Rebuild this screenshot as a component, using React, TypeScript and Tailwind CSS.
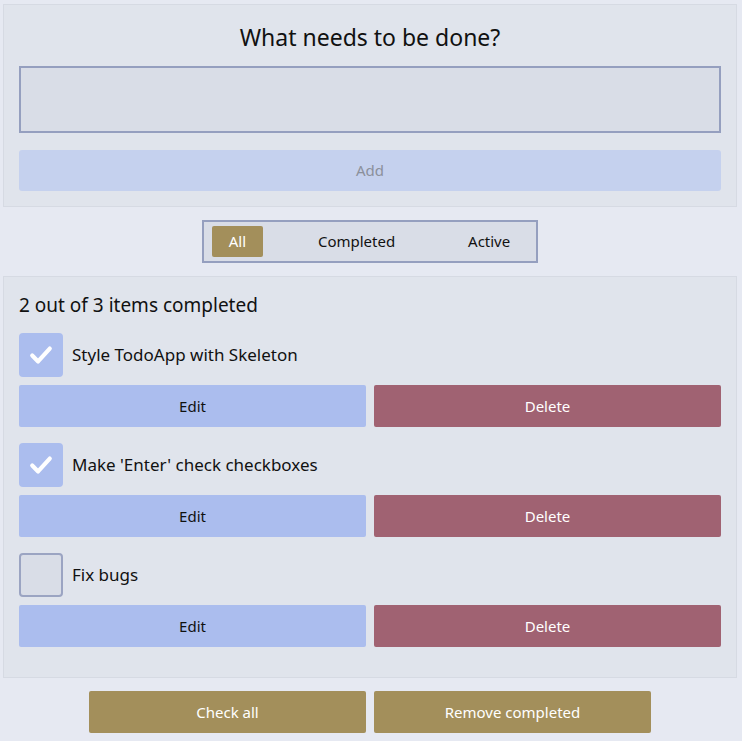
import { useState } from "react";

type Todo = {
    id: number;
    text: string;
    done: boolean;
};

const initialTodos: Todo[] = [
    { id: 1, text: "Style TodoApp with Skeleton", done: true },
    { id: 2, text: "Make 'Enter' check checkboxes", done: true },
    { id: 3, text: "Fix bugs", done: false },
];

const filters = [
    { name: "All", cls: "w-[51px]" },
    { name: "Completed", cls: "w-[188px]" },
    { name: "Active", cls: "w-[78px]" },
];

function CheckIcon() {
    return (
        <svg viewBox="0 0 24 24" className="h-[28px] w-[28px]" fill="none">
            <path
                d="M4.5 12.5l5 5L19.5 6.5"
                stroke="white"
                strokeWidth="3.6"
                strokeLinecap="round"
                strokeLinejoin="round"
            />
        </svg>
    );
}

export default function App() {
    const [todos, setTodos] = useState<Todo[]>(initialTodos);
    const [filter, setFilter] = useState("All");
    const [text, setText] = useState("");

    const doneCount = todos.filter((t) => t.done).length;

    const toggle = (id: number) =>
        setTodos((ts) => ts.map((t) => (t.id === id ? { ...t, done: !t.done } : t)));

    const visible = todos.filter((t) =>
        filter === "All" ? true : filter === "Completed" ? t.done : !t.done
    );

    return (
        <div
            className="min-h-screen bg-[#e6e9f2] pl-[3px] pr-[5px] pt-1 pb-2 text-[#111]"
            style={{ fontFamily: '"Segoe UI", "Noto Sans", sans-serif' }}
        >
            {/* new todo */}
            <div className="border border-[#d6dae3] bg-[#e0e4ec] px-[15px] pt-[16px] pb-[15px]">
                <h1 className="text-center text-[23px] leading-[32px]">What needs to be done?</h1>
                <input
                    value={text}
                    onChange={(e) => setText(e.target.value)}
                    className="mt-[13px] block h-[67px] w-full border-2 border-[#959fbf] bg-[#d9dde7] px-3 text-[17px] outline-none"
                />
                <button
                    disabled={!text}
                    className="mt-[17px] block h-[41px] w-full rounded-[3px] bg-[#c5d1ee] text-[15px] text-[#8b909b]"
                >
                    Add
                </button>
            </div>

            {/* filters */}
            <div className="flex justify-center py-[13px]">
                <div className="flex h-[43px] w-[336px] items-center border-2 border-[#959fbf] bg-[#d9dde7] px-[8px]">
                    {filters.map((f) => (
                        <button
                            key={f.name}
                            onClick={() => setFilter(f.name)}
                            className={`h-[31px] ${f.cls} rounded-[2px] text-[15px] ${filter === f.name ? "bg-[#a38f5b] text-white" : ""}`}
                        >
                            {f.name}
                        </button>
                    ))}
                </div>
            </div>

            {/* list */}
            <div className="border border-[#d6dae3] bg-[#e0e4ec] px-[15px] pt-[14px] pb-[30px]">
                <p className="text-[19px] leading-[28px]">
                    {doneCount} out of {todos.length} items completed
                </p>
                <div className="mt-[14px] flex flex-col gap-4">
                    {visible.map((t) => (
                        <div key={t.id}>
                            <label className="flex cursor-pointer items-center gap-[9px]">
                                <span
                                    onClick={() => toggle(t.id)}
                                    className={
                                        t.done
                                            ? "flex h-[44px] w-[44px] items-center justify-center rounded-[4px] bg-[#abbdee]"
                                            : "flex h-[44px] w-[44px] items-center justify-center rounded-[4px] border-2 border-[#9ba4c2] bg-[#d9dde7]"
                                    }
                                >
                                    {t.done && <CheckIcon />}
                                </span>
                                <span className="text-[17px]">{t.text}</span>
                            </label>
                            <div className="mt-2 grid grid-cols-2 gap-2">
                                <button className="h-[42px] rounded-[2px] bg-[#abbdee] text-[15px] text-[#111]">
                                    Edit
                                </button>
                                <button
                                    onClick={() => setTodos((ts) => ts.filter((x) => x.id !== t.id))}
                                    className="h-[42px] rounded-[2px] bg-[#a06272] text-[15px] text-white"
                                >
                                    Delete
                                </button>
                            </div>
                        </div>
                    ))}
                </div>
            </div>

            {/* footer */}
            <div className="flex justify-center gap-2 pt-[13px]">
                <button
                    onClick={() => setTodos((ts) => ts.map((t) => ({ ...t, done: true })))}
                    className="h-[42px] w-[277px] rounded-[2px] bg-[#a38f5b] text-[15px] text-white"
                >
                    Check all
                </button>
                <button
                    onClick={() => setTodos((ts) => ts.filter((t) => !t.done))}
                    className="h-[42px] w-[277px] rounded-[2px] bg-[#a38f5b] text-[15px] text-white"
                >
                    Remove completed
                </button>
            </div>
        </div>
    );
}
